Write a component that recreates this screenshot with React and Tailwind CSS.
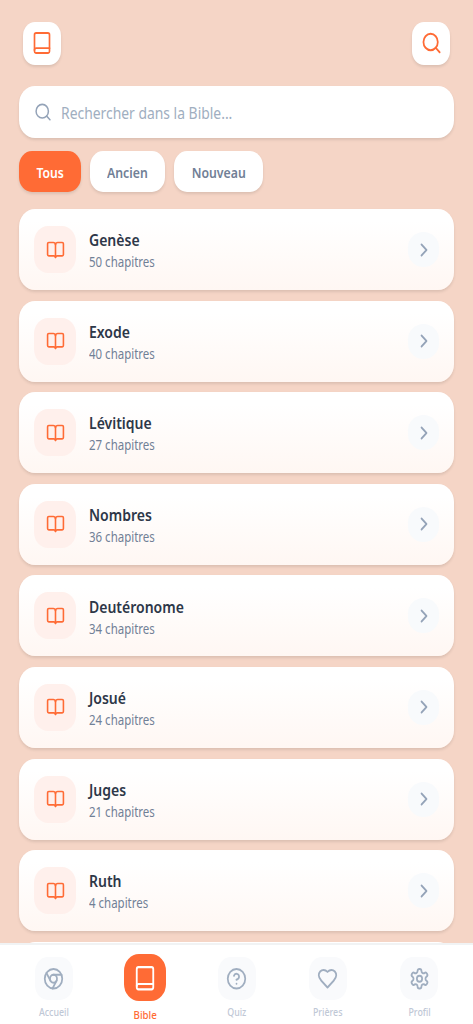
import React from "react";

const svgProps = {
  fill: "none",
  stroke: "currentColor",
  strokeWidth: 2,
  strokeLinecap: "round",
  strokeLinejoin: "round",
  viewBox: "0 0 24 24",
  preserveAspectRatio: "none",
};

function ClosedBookIcon({ className }) {
  return (
    <svg {...svgProps} className={className}>
      <rect x="3" y="2" width="18" height="20.5" rx="1.9" />
      <path d="M3 19.4a1.9 1.9 0 0 1 1.9-1.9H21" />
    </svg>
  );
}

function SearchIcon({ className }) {
  return (
    <svg {...svgProps} className={className}>
      <circle cx="11" cy="11" r="8.2" />
      <path d="m21.3 21.3-4.4-4.4" />
    </svg>
  );
}

function OpenBookIcon({ className }) {
  return (
    <svg {...svgProps} className={className}>
      <path d="M12 5.5V21" />
      <path d="M3.5 19A1.5 1.5 0 0 1 2 17.5v-13A1.5 1.5 0 0 1 3.5 3H9a3 3 0 0 1 3 2.5A3 3 0 0 1 15 3h5.5A1.5 1.5 0 0 1 22 4.5v13a1.5 1.5 0 0 1-1.5 1.5H14a2 2 0 0 0-2 1.8A2 2 0 0 0 10 19z" />
    </svg>
  );
}

function ChevronIcon({ className }) {
  return (
    <svg {...svgProps} className={className}>
      <path d="m9 18 6-6-6-6" />
    </svg>
  );
}

function ChromeIcon({ className }) {
  return (
    <svg {...svgProps} className={className}>
      <circle cx="12" cy="12" r="10" />
      <circle cx="12" cy="12" r="4" />
      <path d="M21.17 8H12M3.95 6.06 8.54 14M10.88 21.94 15.46 14" />
    </svg>
  );
}

function HelpIcon({ className }) {
  return (
    <svg {...svgProps} className={className}>
      <circle cx="12" cy="12" r="10" />
      <path d="M9.09 9a3 3 0 0 1 5.83 1c0 2-3 3-3 3M12 17h.01" />
    </svg>
  );
}

function HeartIcon({ className }) {
  return (
    <svg {...svgProps} className={className}>
      <path d="M19 14c1.49-1.46 3-3.21 3-5.5A5.5 5.5 0 0 0 16.5 3c-1.76 0-3 .5-4.5 2-1.5-1.5-2.74-2-4.5-2A5.5 5.5 0 0 0 2 8.5c0 2.3 1.5 4.05 3 5.5l7 7Z" />
    </svg>
  );
}

function SettingsIcon({ className }) {
  return (
    <svg {...svgProps} className={className}>
      <path d="M12.22 2h-.44a2 2 0 0 0-2 2v.18a2 2 0 0 1-1 1.73l-.43.25a2 2 0 0 1-2 0l-.15-.08a2 2 0 0 0-2.73.73l-.22.38a2 2 0 0 0 .73 2.73l.15.1a2 2 0 0 1 1 1.72v.51a2 2 0 0 1-1 1.74l-.15.09a2 2 0 0 0-.73 2.73l.22.38a2 2 0 0 0 2.73.73l.15-.08a2 2 0 0 1 2 0l.43.25a2 2 0 0 1 1 1.73V20a2 2 0 0 0 2 2h.44a2 2 0 0 0 2-2v-.18a2 2 0 0 1 1-1.73l.43-.25a2 2 0 0 1 2 0l.15.08a2 2 0 0 0 2.73-.73l.22-.39a2 2 0 0 0-.73-2.73l-.15-.08a2 2 0 0 1-1-1.74v-.5a2 2 0 0 1 1-1.74l.15-.09a2 2 0 0 0 .73-2.73l-.22-.38a2 2 0 0 0-2.73-.73l-.15.08a2 2 0 0 1-2 0l-.43-.25a2 2 0 0 1-1-1.73V4a2 2 0 0 0-2-2z" />
      <circle cx="12" cy="12" r="3" />
    </svg>
  );
}

const books = [
  ["Genèse", 50],
  ["Exode", 40],
  ["Lévitique", 27],
  ["Nombres", 36],
  ["Deutéronome", 34],
  ["Josué", 24],
  ["Juges", 21],
  ["Ruth", 4],
];

const tabs = [
  { label: "Accueil", Icon: ChromeIcon },
  { label: "Bible", Icon: ClosedBookIcon, active: true },
  { label: "Quiz", Icon: HelpIcon },
  { label: "Prières", Icon: HeartIcon },
  { label: "Profil", Icon: SettingsIcon },
];

const cardShadow = "shadow-[0_2px_3px_rgba(0,0,0,0.1)]";

function BookCard({ name, chapters }) {
  return (
    <li className={`flex h-[81px] shrink-0 items-center rounded-[16px/18px] bg-linear-to-b from-white from-15% to-[#fff7f3] px-[15px] ${cardShadow}`}>
      <div className="flex h-[47px] w-[42px] items-center justify-center rounded-[14px/16px] bg-[#fff0ec] text-[#ff6b35]">
        <OpenBookIcon className="h-5 w-[19px]" />
      </div>
      <div className="ml-[13px] flex-1 pt-[3.5px]">
        <h2 className="origin-left scale-x-[0.875] text-[16px] font-semibold leading-[22px] text-[#2d3748]">{name}</h2>
        <p className="origin-left scale-x-[0.85] text-[13.5px] leading-[22px] text-[#718096]">{chapters} chapitres</p>
      </div>
      <div className="flex h-[35px] w-[31px] items-center justify-center rounded-full bg-[#f8fafc] text-[#94a3b8]">
        <ChevronIcon className="h-[22px] w-5" />
      </div>
    </li>
  );
}

export default function App() {
  return (
    <div className="flex h-[1024px] w-[473px] flex-col overflow-hidden bg-[#f5d5c6] font-['Noto_Sans',sans-serif]">
      <header className="flex shrink-0 justify-between px-[23px] pt-[21.5px]">
        <button className={`flex h-[43px] w-[38px] items-center justify-center rounded-[12px/14px] bg-white text-[#ff6b35] ${cardShadow}`}>
          <ClosedBookIcon className="mb-px h-[23.5px] w-[20px]" />
        </button>
        <button className={`flex h-[43px] w-[38px] items-center justify-center rounded-[12px/14px] bg-white text-[#ff6b35] ${cardShadow}`}>
          <SearchIcon className="mb-px h-6 w-[21px]" />
        </button>
      </header>

      <main className="flex min-h-0 flex-1 flex-col overflow-hidden px-[19px] pt-[21px]">
        <div className={`flex h-[52px] shrink-0 items-center rounded-[16px/18px] bg-white pl-[15px] ${cardShadow}`}>
          <SearchIcon className="h-5 w-[18px] text-[#94a3b8]" />
          <span className="ml-[9px] origin-left scale-x-[0.868] whitespace-nowrap pt-[2px] text-[16px] text-[#a0aec0]">
            Rechercher dans la Bible...
          </span>
        </div>

        <div className="mt-[13px] flex h-[41.5px] shrink-0 gap-[9.5px] text-[13.5px] font-semibold">
          <button className={`w-[61.5px] rounded-[13px/15px] bg-[#ff6b35] pt-[3px] text-white ${cardShadow}`}>
            <span className="inline-block scale-x-[0.9]">Tous</span>
          </button>
          <button className={`w-[74.5px] rounded-[13px/15px] bg-white pt-[3px] text-[#718096] ${cardShadow}`}>
            <span className="inline-block scale-x-[0.91]">Ancien</span>
          </button>
          <button className={`w-[89px] rounded-[13px/15px] bg-white pt-[3px] text-[#718096] ${cardShadow}`}>
            <span className="inline-block scale-x-[0.91]">Nouveau</span>
          </button>
        </div>

        <ul className="mt-[17px] flex flex-col gap-[10.6px]">
          {books.map(([name, chapters]) => (
            <BookCard key={name} name={name} chapters={chapters} />
          ))}
          <li className="h-[81px] shrink-0 rounded-[16px/18px] bg-white" />
        </ul>
      </main>

      <nav className="flex h-[81.5px] shrink-0 justify-around border-t-2 border-[#f1f3f4] bg-white px-[8px]">
        {tabs.map(({ label, Icon, active }) =>
          active ? (
            <div key={label} className="flex w-[91.5px] flex-col items-center pt-[9.5px] text-[#ff6b35]">
              <div className="flex h-[47px] w-[42px] items-center justify-center rounded-[15px/17px] bg-[#ff6b35] text-white">
                <Icon className="h-[26px] w-[22px]" />
              </div>
              <span className="mt-[6px] scale-x-[0.885] text-[11px] font-medium leading-4">{label}</span>
            </div>
          ) : (
            <div key={label} className="flex w-[91.5px] flex-col items-center pt-[12.5px] text-[#a0aec0]">
              <div className="flex h-[43px] w-[38px] items-center justify-center rounded-[13px/15px] bg-[#f9fafc]">
                <Icon className="h-[23.5px] w-[21px]" />
              </div>
              <span className="mt-[4px] scale-x-[0.885] text-[10px] font-medium leading-4 text-[#bfc8d6]">{label}</span>
            </div>
          )
        )}
      </nav>
    </div>
  );
}
